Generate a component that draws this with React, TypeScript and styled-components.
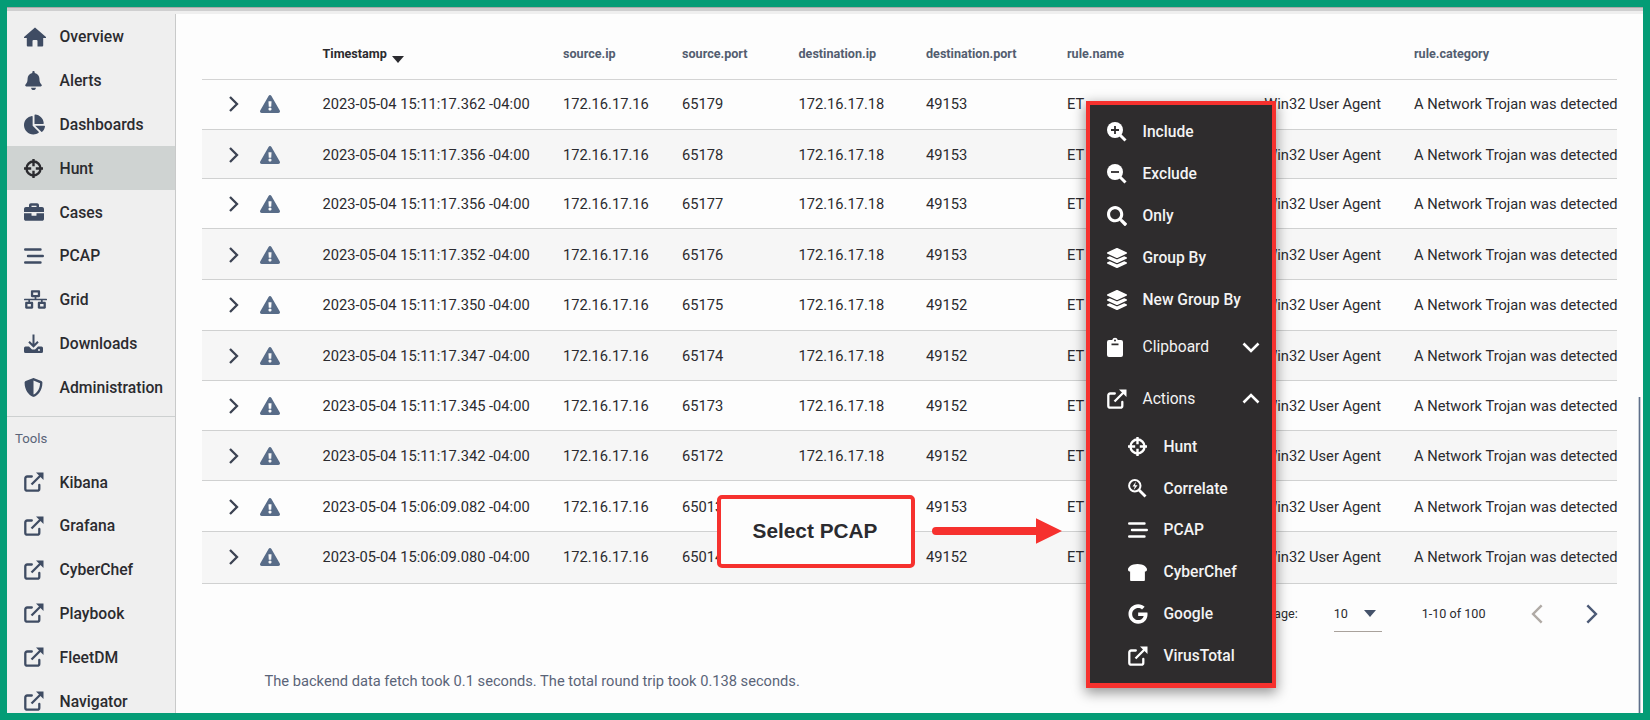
import React from "react";
import styled, { createGlobalStyle, css } from "styled-components";
import {
  FaBell, FaChartPie, FaBriefcase, FaNetworkWired, FaShieldAlt, FaExclamationTriangle,
  FaSearch, FaLayerGroup, FaBreadSlice, FaGoogle,
} from "react-icons/fa";

const Global = createGlobalStyle`
  * { box-sizing: border-box; }
  body { margin: 0; font-family: Roboto, "Liberation Sans", sans-serif; color: #2b2b2f; }
  svg { display: block; }
`;

const Frame = styled.div`
  position: relative;
  display: flex;
  width: 1650px;
  height: 720px;
  border: 7px solid #049c76;
  background: #fdfdfd;
  overflow: hidden;
`;

const TopShade = styled.div`
  position: absolute;
  top: 0;
  left: 0;
  right: 0;
  height: 7px;
  background: linear-gradient(#a9a9a9 0 1px, #cfcfd0 1px 4px, #efefef 4px 7px);
`;

const Sidebar = styled.nav`
  display: flex;
  flex-direction: column;
  flex: none;
  width: 169px;
  padding-top: 8px;
  background: #efefef;
  border-right: 1px solid #c9caca;
`;

const NavItem = styled.a<{ $active?: boolean }>`
  display: flex;
  align-items: center;
  flex: none;
  height: 43.8px;
  font-size: 15.7px;
  font-weight: 500;
  white-space: nowrap;
  background: ${(p) => (p.$active ? "#cfd3d2" : "transparent")};
`;

const NavIcon = styled.span<{ $active?: boolean }>`
  flex: none;
  width: 36px;
  margin-left: 16.5px;
  color: ${(p) => (p.$active ? "#2b2b2f" : "#3f4c63")};
`;

const Divider = styled.hr`
  flex: none;
  width: 100%;
  height: 1px;
  margin: 7px 0 0;
  border: 0;
  background: #cdd0d0;
`;

const ToolsTitle = styled.div`
  flex: none;
  height: 43px;
  padding: 0 8px;
  font-size: 13.2px;
  line-height: 43px;
  color: #5a6478;
`;

const Main = styled.main`
  flex: 1;
  min-width: 0;
  padding: 0 26px;
`;

const rowGrid = css`
  display: grid;
  grid-template-columns: 57.5px 63px 240.5px 119px 116.5px 127.5px 141px 347px 203px;
  align-items: center;
  white-space: nowrap;
`;

const HeaderRow = styled.div`
  ${rowGrid}
  height: 73px;
  padding-top: 20px;
  border-bottom: 1px solid #d4d4d4;
  font-size: 12.6px;
  font-weight: 700;
  color: #535d70;
`;

const HeaderCell = styled.div<{ $first?: boolean; $sorted?: boolean }>`
  display: flex;
  align-items: center;
  gap: 5px;
  grid-column: ${(p) => (p.$first ? "3" : "auto")};
  color: ${(p) => (p.$sorted ? "#2b2b2f" : "inherit")};
`;

const SortCaret = styled.span`
  margin: 11px 0 -2px;
  border: 6px solid transparent;
  border-top: 7px solid #2b2b2f;
  border-bottom: 0;
`;

const Row = styled.div<{ $height: number; $striped: boolean; $top: number; $bottom: number }>`
  ${rowGrid}
  height: ${(p) => p.$height}px;
  padding: ${(p) => p.$top}px 0 ${(p) => p.$bottom}px;
  border-bottom: 1px solid #d0d1d1;
  font-size: 14.68px;
  background: ${(p) => (p.$striped ? "#f6f6f6" : "transparent")};
`;

const Cell = styled.div`
  display: flex;
`;

const ExpandCell = styled(Cell)`
  padding-left: 22px;
  color: #3c4353;
`;

const AlertCell = styled(Cell)`
  padding-left: 0.5px;
  color: #586c88;
`;

const RuleCell = styled(Cell)`
  justify-content: space-between;
  padding-right: 33px;
`;

const Pager = styled.div`
  display: flex;
  align-items: center;
  justify-content: flex-end;
  height: 59px;
  padding-right: 15px;
  font-size: 12.6px;
`;

const PerPage = styled.div`
  display: flex;
  align-items: center;
  justify-content: space-between;
  width: 48px;
  height: 37px;
  margin: 0 40px 0 36px;
  padding-right: 6px;
  border-bottom: 1px solid #a9a29c;
`;

const PageCaret = styled.span`
  border: 6px solid transparent;
  border-top: 7px solid #44526a;
  border-bottom: 0;
`;

const PageArrow = styled.span<{ $left: number; $off?: boolean }>`
  margin-left: ${(p) => p.$left}px;
  color: ${(p) => (p.$off ? "#b0aaa5" : "#4c5a76")};
`;

const Timing = styled.p`
  margin: 28px 0 0 62.5px;
  font-size: 14.66px;
  line-height: 20px;
  color: #5a6478;
`;

const ScrollThumb = styled.div`
  position: absolute;
  top: 390px;
  right: 2px;
  bottom: 0;
  width: 3px;
  border: solid #c6ced6;
  border-width: 0 1px;
  background: #5f6f8a;
`;

const Menu = styled.div`
  position: absolute;
  left: 1079px;
  top: 94px;
  width: 190px;
  height: 587px;
  padding-top: 6.3px;
  border: 4px solid #f6312e;
  border-bottom-width: 5px;
  background: #2e2c2d;
  color: #f3f3f3;
  box-shadow: 0 4px 12px 1px rgba(0, 0, 0, 0.4);
`;

const MenuItem = styled.div<{ $height?: number; $sub?: boolean; $light?: boolean }>`
  display: flex;
  align-items: center;
  height: ${(p) => p.$height ?? 41.9}px;
  padding: 0 12px 0 ${(p) => (p.$sub ? 37.5 : 16.5)}px;
  font-size: 15.6px;
  font-weight: ${(p) => (p.$light ? 400 : 500)};
  white-space: nowrap;
`;

const MenuIcon = styled.span<{ $sub?: boolean }>`
  flex: none;
  width: 36px;
  color: #fff;
`;

const MenuChevron = styled.span`
  margin-left: auto;
  color: #fff;
`;

const Callout = styled.div`
  position: absolute;
  left: 710px;
  top: 488px;
  display: flex;
  align-items: center;
  justify-content: center;
  width: 198px;
  height: 73px;
  padding: 0 2px 2px 0;
  border: 4px solid #f6312e;
  border-radius: 5px;
  background: #fdfdfd;
  font: bold 20.8px "Liberation Sans", Arial, sans-serif;
`;

const Arrow = styled.svg`
  position: absolute;
  left: 924px;
  top: 511px;
`;

type Dir = "right" | "left" | "down" | "up";
const chevrons: Record<Dir, string> = {
  right: "M6 2 L13 9 L6 16",
  left: "M12 2 L5 9 L12 16",
  down: "M1.5 5.5 L9 13 L16.5 5.5",
  up: "M1.5 12.5 L9 5 L16.5 12.5",
};
const Chevron = ({ dir, size = 18, weight = 2.3 }: { dir: Dir; size?: number; weight?: number }) => (
  <svg width={size} height={size} viewBox="0 0 18 18" fill="none" stroke="currentColor" strokeWidth={weight}>
    <path d={chevrons[dir]} />
  </svg>
);

const HomeIcon = () => (
  <svg width="22" height="20" viewBox="0 0 22 20" fill="currentColor">
    <path d="M11 0.500L22 10v1h-2.800v7.500q0 1-1 1H13.500V14q0-1-1-1h-3q-1 0-1 1v5.500H3.800q-1 0-1-1V11H0v-1z" />
  </svg>
);

const CrosshairIcon = () => (
  <svg width="19" height="19" viewBox="0 0 19 19" fill="none" stroke="currentColor" strokeWidth="2.400">
    <circle cx="9.500" cy="9.500" r="7" />
    <path d="M9.500 0v7.200M9.500 11.800V19M0 9.500h7.200M11.800 9.500H19" />
  </svg>
);

const StreamIcon = () => (
  <svg width="20" height="16" viewBox="0 0 20 16" fill="none" stroke="currentColor" strokeWidth="2.400" strokeLinecap="round">
    <path d="M1.200 1.500h15.300M4 8h14.800M1.200 14.500h15.300" />
  </svg>
);

const ExternalIcon = () => (
  <svg width="20" height="20" viewBox="0 0 20 20" fill="none" stroke="currentColor" strokeWidth="2.300">
    <path d="M7.800 4.500H3.300Q1.300 4.500 1.300 6.500V16.700Q1.300 18.700 3.300 18.700H13.300Q15.300 18.700 15.300 16.700V13" strokeLinecap="round" />
    <path d="M7.500 12.500L17 3" />
    <path d="M12 0.500H19.500V8z" fill="currentColor" stroke="none" />
  </svg>
);

const DownloadIcon = () => (
  <svg width="19" height="19" viewBox="0 0 19 19">
    <path d="M9.500 0.500V12M5 7.800l4.500 4.500L14 7.800" fill="none" stroke="currentColor" strokeWidth="2" />
    <path
      fill="currentColor"
      fillRule="evenodd"
      d="M1.500 12.500H5l3 3h3l3-3h3.500q1.500 0 1.500 1.500v3.500q0 1.500-1.500 1.500h-16Q0 19 0 17.500V14q0-1.500 1.500-1.500zM14 15.200v1.600h2v-1.600z"
    />
  </svg>
);

const ZoomIcon = ({ plus }: { plus?: boolean }) => (
  <svg width="20" height="20" viewBox="0 0 20 20">
    <circle cx="8" cy="8" r="8" fill="currentColor" />
    <path d="M12 12l6.500 6.500" stroke="currentColor" strokeWidth="3" />
    <path d={plus ? "M4 8h8M8 4v8" : "M4 8h8"} stroke="#2e2c2d" strokeWidth="1.800" />
  </svg>
);

const ClipboardIcon = () => (
  <svg width="16" height="20" viewBox="0 0 16 20">
    <path
      fill="currentColor"
      fillRule="evenodd"
      d="M2 3h3.200a2.900 2.900 0 0 1 5.600 0H14q2 0 2 2v13q0 2-2 2H2q-2 0-2-2V5q0-2 2-2zM8 2.500a1 1 0 1 0 0 2 1 1 0 0 0 0-2zM4.500 6.500v1.800h7v-1.800z"
    />
  </svg>
);

const CorrelateIcon = () => (
  <svg width="19" height="19" viewBox="0 0 19 19" fill="none" stroke="currentColor">
    <circle cx="6.800" cy="6.800" r="5.700" strokeWidth="2" />
    <path d="M11 11l6.500 6.500" strokeWidth="2.800" />
    <path d="M8 2.600L4.500 7.400h2.300L5.600 11.200 9.600 6.200H7z" fill="currentColor" stroke="none" />
  </svg>
);

const navItems = [
  { label: "Overview", icon: <HomeIcon /> },
  { label: "Alerts", icon: <FaBell size={19} /> },
  { label: "Dashboards", icon: <FaChartPie size={21} /> },
  { label: "Hunt", icon: <CrosshairIcon />, active: true },
  { label: "Cases", icon: <FaBriefcase size={20} /> },
  { label: "PCAP", icon: <StreamIcon /> },
  { label: "Grid", icon: <FaNetworkWired size={23} /> },
  { label: "Downloads", icon: <DownloadIcon /> },
  { label: "Administration", icon: <FaShieldAlt size={19} /> },
];

const tools = ["Kibana", "Grafana", "CyberChef", "Playbook", "FleetDM", "Navigator"];

const columns = ["Timestamp", "source.ip", "source.port", "destination.ip", "destination.port", "rule.name", "rule.category"];

const events = [
  { time: "2023-05-04 15:11:17.362 -04:00", src: "65179", dst: "49153", height: 50, bottom: 1 },
  { time: "2023-05-04 15:11:17.356 -04:00", src: "65178", dst: "49153", height: 49, top: 2 },
  { time: "2023-05-04 15:11:17.356 -04:00", src: "65177", dst: "49153", height: 50 },
  { time: "2023-05-04 15:11:17.352 -04:00", src: "65176", dst: "49153", height: 51, top: 1 },
  { time: "2023-05-04 15:11:17.350 -04:00", src: "65175", dst: "49152", height: 51, bottom: 1 },
  { time: "2023-05-04 15:11:17.347 -04:00", src: "65174", dst: "49152", height: 50 },
  { time: "2023-05-04 15:11:17.345 -04:00", src: "65173", dst: "49152", height: 50 },
  { time: "2023-05-04 15:11:17.342 -04:00", src: "65172", dst: "49152", height: 50 },
  { time: "2023-05-04 15:06:09.082 -04:00", src: "65013", dst: "49153", height: 51, top: 1 },
  { time: "2023-05-04 15:06:09.080 -04:00", src: "65014", dst: "49152", height: 52, bottom: 1 },
];

const filters = [
  { label: "Include", icon: <ZoomIcon plus /> },
  { label: "Exclude", icon: <ZoomIcon /> },
  { label: "Only", icon: <FaSearch size={20} /> },
  { label: "Group By", icon: <FaLayerGroup size={20} /> },
  { label: "New Group By", icon: <FaLayerGroup size={20} /> },
];

const actions = [
  { label: "Hunt", icon: <CrosshairIcon /> },
  { label: "Correlate", icon: <CorrelateIcon /> },
  { label: "PCAP", icon: <StreamIcon /> },
  { label: "CyberChef", icon: <FaBreadSlice size={19} /> },
  { label: "Google", icon: <FaGoogle size={20} /> },
  { label: "VirusTotal", icon: <ExternalIcon /> },
];

export default function App() {
  return (
    <Frame>
      <Global />
      <Sidebar>
        {navItems.map((n) => (
          <NavItem key={n.label} $active={n.active}>
            <NavIcon $active={n.active}>{n.icon}</NavIcon>
            {n.label}
          </NavItem>
        ))}
        <Divider />
        <ToolsTitle>Tools</ToolsTitle>
        {tools.map((t) => (
          <NavItem key={t}>
            <NavIcon><ExternalIcon /></NavIcon>
            {t}
          </NavItem>
        ))}
      </Sidebar>

      <Main>
        <HeaderRow>
          {columns.map((c, i) => (
            <HeaderCell key={c} $first={i === 0} $sorted={i === 0}>
              {c}
              {i === 0 && <SortCaret />}
            </HeaderCell>
          ))}
        </HeaderRow>
        {events.map((e, i) => (
          <Row key={e.src} $height={e.height} $striped={i % 2 === 1} $top={e.top ?? 0} $bottom={e.bottom ?? 0}>
            <ExpandCell><Chevron dir="right" /></ExpandCell>
            <AlertCell><FaExclamationTriangle size={20} /></AlertCell>
            <Cell>{e.time}</Cell>
            <Cell>172.16.17.16</Cell>
            <Cell>{e.src}</Cell>
            <Cell>172.16.17.18</Cell>
            <Cell>{e.dst}</Cell>
            <RuleCell><span>ET</span><span>Win32 User Agent</span></RuleCell>
            <Cell>A Network Trojan was detected</Cell>
          </Row>
        ))}
        <Pager>
          <span>Rows per page:</span>
          <PerPage>10<PageCaret /></PerPage>
          <span>1-10 of 100</span>
          <PageArrow $left={41} $off><Chevron dir="left" size={22} weight={2} /></PageArrow>
          <PageArrow $left={31.5}><Chevron dir="right" size={22} weight={2} /></PageArrow>
        </Pager>
        <Timing>The backend data fetch took 0.1 seconds. The total round trip took 0.138 seconds.</Timing>
      </Main>

      <TopShade />
      <ScrollThumb />

      <Callout>Select PCAP</Callout>
      <Arrow width="134" height="26" viewBox="0 0 134 26" fill="#f6312e">
        <path d="M5 9H105V0.300L131 13L105 25.700V17H5A4 4 0 0 1 5 9Z" />
      </Arrow>

      <Menu>
        {filters.map((f) => (
          <MenuItem key={f.label}>
            <MenuIcon>{f.icon}</MenuIcon>
            {f.label}
          </MenuItem>
        ))}
        <MenuItem $light $height={52}>
          <MenuIcon><ClipboardIcon /></MenuIcon>
          Clipboard
          <MenuChevron><Chevron dir="down" weight={2.6} /></MenuChevron>
        </MenuItem>
        <MenuItem $light $height={53}>
          <MenuIcon><ExternalIcon /></MenuIcon>
          Actions
          <MenuChevron><Chevron dir="up" weight={2.6} /></MenuChevron>
        </MenuItem>
        {actions.map((a) => (
          <MenuItem key={a.label} $sub>
            <MenuIcon>{a.icon}</MenuIcon>
            {a.label}
          </MenuItem>
        ))}
      </Menu>
    </Frame>
  );
}
